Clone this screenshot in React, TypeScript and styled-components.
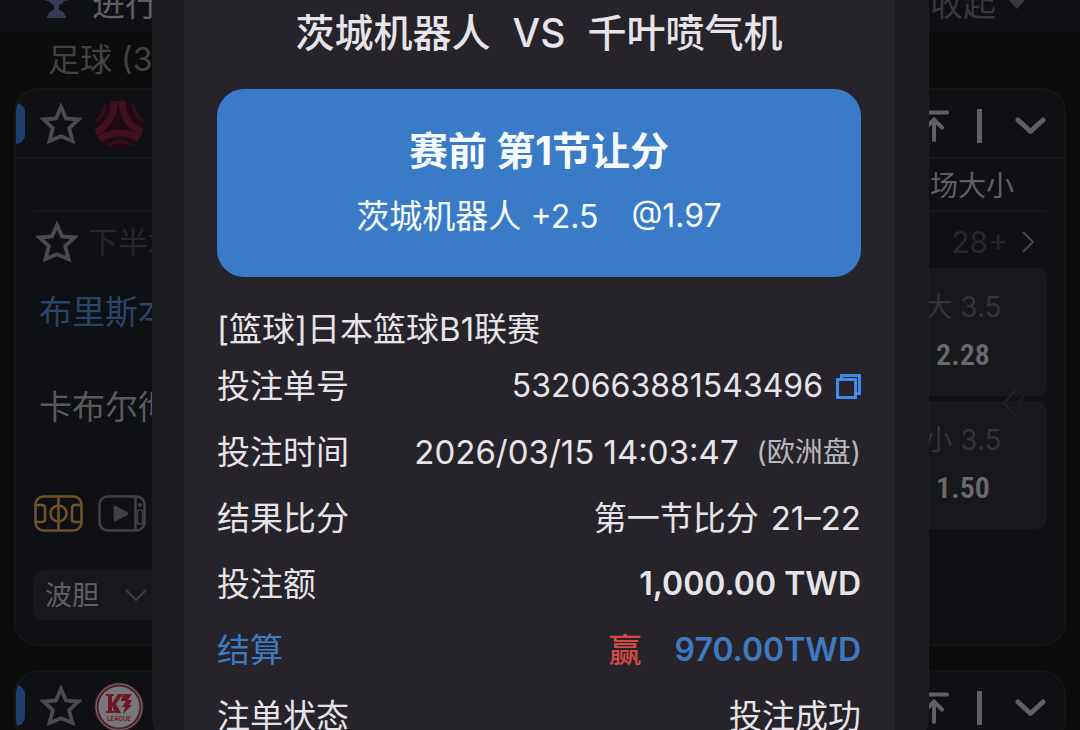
import React from "react";
import styled, { createGlobalStyle } from "styled-components";

const GlobalStyle = createGlobalStyle`
  * { box-sizing: border-box; }
  body {
    margin: 0;
    background: #0c0c0d;
    font-family: Inter, "Noto Sans CJK SC", sans-serif;
  }
  h1, h2, h3, p, dl, dd, dt { margin: 0; font-weight: 400; }
  button { border: 0; padding: 0; background: none; color: inherit; font: inherit; display: flex; cursor: pointer; }
  svg { display: block; flex: none; }
`;

const Screen = styled.div`
  position: relative;
  height: 100vh;
  overflow: hidden;
`;

/* ---------- match list ---------- */

const TopBar = styled.header`
  display: flex;
  align-items: flex-end;
  justify-content: space-between;
  height: 32px;
  padding: 0 54px 0 38px;
  overflow: hidden;
  background: #0f1014;
`;

const TopGroup = styled.div<{ $gap: number; $color: string }>`
  display: flex;
  align-items: center;
  gap: ${(p) => p.$gap}px;
  height: 56px;
  flex: none;
  font-size: 33px;
  line-height: 56px;
  color: ${(p) => p.$color};
`;

const SectionTitle = styled.h2`
  height: 56px;
  padding-left: 48px;
  font-size: 32px;
  line-height: 56px;
  color: #434345;
`;

const Card = styled.section`
  margin: 0 14px 24px;
  border: 2px solid #141517;
  border-radius: 24px;
  overflow: hidden;
  background: #0f1013;
`;

const LeagueBar = styled.div`
  display: flex;
  align-items: center;
  height: 69px;
  padding-right: 18px;
  border-bottom: 2px solid #17181a;
  color: #606063;
`;

const Marker = styled.span`
  width: 9px;
  height: 41px;
  margin-right: 15px;
  border-radius: 0 9px 9px 0;
  background: #1d4070;
`;

const LeagueLogo = styled.span`
  margin-left: 12px;
  margin-right: auto;
  padding-top: 2px;
`;

const BarTools = styled.div`
  display: flex;
  align-items: center;
  gap: 28px;
  padding-top: 4px;
`;

const Rule = styled.span`
  width: 5px;
  height: 34px;
  background: #606063;
`;

const CardBody = styled.div`
  padding: 0 17px 24px;
`;

const Columns = styled.div`
  display: flex;
  justify-content: flex-end;
  height: 53px;
  padding-right: 5px;
  border-bottom: 2px solid #16171a;
`;

const ColumnTitle = styled.h3`
  width: 168px;
  font-size: 28px;
  line-height: 55px;
  text-align: center;
  color: #606063;
`;

const PeriodRow = styled.div`
  display: flex;
  align-items: center;
  gap: 10px;
  height: 56px;
  padding: 4px 13px 0 3px;
  font-size: 30px;
  line-height: 48px;
  color: #26272a;
`;

const More = styled.button`
  align-items: center;
  gap: 14px;
  margin-left: auto;
`;

const MatchGrid = styled.div`
  display: grid;
  grid-template-columns: 1fr 168px;
`;

const Side = styled.div`
  padding-left: 6px;
`;

const Team = styled.p<{ $color: string }>`
  height: 95px;
  font-size: 33px;
  line-height: 89px;
  color: ${(p) => p.$color};
`;

const Media = styled.div`
  display: flex;
  gap: 15px;
  margin-top: 37px;
  margin-left: -5px;
`;

const Odds = styled.div`
  display: flex;
  flex-direction: column;
  gap: 5px;
`;

const Odd = styled.button`
  flex-direction: column;
  align-items: center;
  height: 128px;
  padding-top: 15px;
  border-radius: 10px;
  background: #17181b;
`;

const OddName = styled.span`
  font-size: 28px;
  line-height: 48px;
  color: #343538;
`;

const OddValue = styled.span`
  font-family: "Liberation Sans Narrow", "Roboto Condensed", Roboto, sans-serif;
  font-size: 30px;
  font-weight: 600;
  line-height: 48px;
  color: #6a6a6c;
`;

const Picker = styled.label`
  display: flex;
  align-items: center;
  width: 136px;
  height: 50px;
  margin-top: 38px;
  border-radius: 10px;
  background: #17181b;
  color: #404043;
`;

const PickerSelect = styled.select`
  appearance: none;
  width: 92px;
  height: 50px;
  padding: 0 0 0 12px;
  border: 0;
  background: none;
  color: #606063;
  font: inherit;
  font-size: 27px;
`;

const SideHandle = styled.span`
  position: absolute;
  top: 389px;
  right: 52px;
`;

/* ---------- bet slip dialog ---------- */

const Overlay = styled.div`
  position: absolute;
  inset: 0;
  padding: 0 151px 0 152px;
  overflow: hidden;
`;

const Dialog = styled.div`
  height: calc(100% + 16px);
  padding: 0 34px 0 32px;
  border-radius: 0 0 28px 28px;
  overflow: hidden;
  background: #1d1c20;
`;

const Slip = styled.div`
  height: 100%;
  padding: 0 34px 0 33px;
  background: #26232a;
  color: #e6e4e9;
`;

const Fixture = styled.h1`
  display: flex;
  justify-content: center;
  gap: 22px;
  height: 62px;
  font-size: 39px;
  font-weight: 500;
  line-height: 65px;
  white-space: nowrap;
`;

const Pick = styled.section`
  margin-top: 27px;
  padding: 31px 0 34px;
  border-radius: 27px;
  background: #3a7bc8;
  color: #f6fbff;
  text-align: center;
`;

const PickTitle = styled.h2`
  font-size: 39px;
  font-weight: 700;
  line-height: 61px;
`;

const PickLine = styled.p`
  display: flex;
  justify-content: center;
  gap: 33px;
  margin-top: 9px;
  font-size: 33px;
  line-height: 52px;
`;

const League = styled.p`
  margin-top: 28px;
  font-size: 33px;
  line-height: 48px;
`;

const Row = styled.div<{ $color?: string }>`
  display: flex;
  align-items: center;
  justify-content: space-between;
  height: 66px;
  font-size: 33px;
  line-height: 66px;
  white-space: nowrap;
  color: ${(p) => p.$color ?? "inherit"};
`;

const Value = styled.dd<{ $bold?: boolean; $gap?: number }>`
  display: flex;
  align-items: center;
  gap: ${(p) => p.$gap ?? 0}px;
  font-weight: ${(p) => (p.$bold ? 600 : 400)};
`;

const Num = styled.span`
  font-size: 32px;
`;

const Market = styled.span`
  font-size: 28px;
  color: #b9b7bd;
`;

const Win = styled.span`
  font-weight: 500;
  color: #d14a44;
`;

const Copy = styled.button`
  color: #3d8bea;
`;

/* ---------- drawings ---------- */

const Star = () => (
  <svg width="42" height="42" viewBox="0 0 42 42" fill="none" stroke="#4a4a4e" strokeWidth="3.8" strokeLinejoin="miter">
    <path d="M21 4 26 15.500 38.500 16.500 29.200 25.200 32.500 38 21 33.200 9.500 38 12.800 25.200 3.500 16.500 16 15.500Z" />
  </svg>
);

const Trophy = () => (
  <svg width="37" height="44" viewBox="0 0 37 44" fill="#363a50">
    <path d="M7 0h23v5h7c0 9-4 14-11 14-2 3-4 4-5 4v5c4 1 6 3 6 6h1v2H9v-2h1c0-3 2-5 6-6v-5c-1 0-3-1-5-4C4 19 0 14 0 5h7Z" />
  </svg>
);

const ToTop = () => (
  <svg width="32" height="34" viewBox="0 0 32 34" fill="none" stroke="currentColor" strokeWidth="4" strokeLinecap="round">
    <path d="M2 3.500H30" />
    <path d="M17 31V12M9 18.500 17 10.500 25 18.500" />
  </svg>
);

const ThickChevron = () => (
  <svg width="31" height="18" viewBox="0 0 31 18" fill="none" stroke="currentColor" strokeWidth="5" strokeLinecap="round" strokeLinejoin="round">
    <path d="M3 3 15.500 14.500 28 3" />
  </svg>
);

const BallLogo = () => (
  <svg width="50" height="50" viewBox="0 0 50 50">
    <defs>
      <clipPath id="ball"><circle cx="25" cy="25" r="24.500" /></clipPath>
    </defs>
    <g clipPath="url(#ball)">
      <circle cx="25" cy="25" r="24.500" fill="#1e0a11" />
      <g fill="none" stroke="#430f22" strokeWidth="7">
        <path d="M20 1C21 15 13 26 1 33" />
        <path d="M28 0C28 17 36 28 50 32" />
        <path d="M4 40C16 31 32 30 46 39" />
      </g>
      <g fill="none" stroke="#360d1c" strokeWidth="3">
        <path d="M11 4C11 13 7 18 0 22" />
        <path d="M39 4C40 12 44 18 50 22" />
        <path d="M14 45C22 41 32 41 40 46" />
      </g>
    </g>
  </svg>
);

const K3Logo = () => (
  <svg width="50" height="50" viewBox="0 0 50 50">
    <circle cx="25" cy="25" r="24.500" fill="#4d2029" />
    <circle cx="25" cy="25" r="23" fill="none" stroke="#77777b" strokeWidth="1" />
    <circle cx="25" cy="25" r="20.500" fill="#77777b" />
    <g fill="#6b1a24">
      <path d="M12 12h8v2h-2v7l6-9h5l-7 10 5 9h-6l-3-7v5h2v2h-8v-2h2V14h-2Z" />
      <path d="M29 12h9l-4 6h4l-3 5h3l-9 9 2-7h-3l4-6h-5Z" />
      <text x="25" y="39" fontSize="6" fontWeight="600" textAnchor="middle">LEAGUE</text>
    </g>
  </svg>
);

const PitchIcon = () => (
  <svg width="49" height="37" viewBox="0 0 49 37" fill="none" stroke="#6e5229" strokeWidth="2.600">
    <rect x="1.500" y="1.500" width="46" height="34" rx="8" />
    <circle cx="24.500" cy="18.500" r="8" />
    <path d="M24.500 1.500V35.500M2 10h6c2 0 3 1 3 3v11c0 2-1 3-3 3H2M47 10h-6c-2 0-3 1-3 3v11c0 2 1 3 3 3h6" />
  </svg>
);

const VideoIcon = () => (
  <svg width="48" height="37" viewBox="0 0 48 37" fill="none" stroke="#404145" strokeWidth="2.600">
    <rect x="1.500" y="1.500" width="45" height="34" rx="8" />
    <path d="M37.500 2V35" />
    <rect x="39.500" y="15" width="5" height="14" rx="2" strokeWidth="1.500" />
    <circle cx="42" cy="10" r="2" fill="#404145" stroke="none" />
    <path d="M17 12 29 18.500 17 25Z" fill="#404145" strokeLinejoin="round" />
  </svg>
);

const ChevronButton = styled.button`
  padding-left: 5px;
`;

const LeagueHeader = ({ logo, title }: { logo: React.ReactNode; title: string }) => (
  <LeagueBar>
    <Marker />
    <button aria-label={`收藏 ${title}`}><Star /></button>
    <LeagueLogo>{logo}</LeagueLogo>
    <BarTools>
      <button aria-label="置顶"><ToTop /></button>
      <Rule />
      <ChevronButton aria-label="展开"><ThickChevron /></ChevronButton>
    </BarTools>
  </LeagueBar>
);

const odds = [
  { name: "大 3.5", value: "2.28" },
  { name: "小 3.5", value: "1.50" },
];

export default function App() {
  return (
    <Screen>
      <GlobalStyle />
      <TopBar>
        <TopGroup $gap={17} $color="#606063">
          <Trophy />
          <span>进行中</span>
        </TopGroup>
        <TopGroup $gap={12} $color="#38383b">
          <span>收起</span>
          <svg width="18" height="10" viewBox="0 0 18 10" fill="currentColor"><path d="M0 0h18L9 10Z" /></svg>
        </TopGroup>
      </TopBar>
      <SectionTitle>足球 (3)</SectionTitle>

      <Card>
        <LeagueHeader logo={<BallLogo />} title="足球" />
        <CardBody>
          <Columns><ColumnTitle>全场大小</ColumnTitle></Columns>
          <PeriodRow>
            <button aria-label="收藏比赛"><Star /></button>
            <span>下半场</span>
            <More>
              28+
              <svg width="12" height="22" viewBox="0 0 12 22" fill="none" stroke="#48484b" strokeWidth="2"><path d="M1 1 11 11 1 21" /></svg>
            </More>
          </PeriodRow>
          <MatchGrid>
            <Side>
              <Team $color="#2a4567">布里斯本</Team>
              <Team $color="#5a5a5d">卡布尔彻</Team>
              <Media>
                <button aria-label="赛况"><PitchIcon /></button>
                <button aria-label="视频"><VideoIcon /></button>
              </Media>
            </Side>
            <Odds>
              {odds.map((o) => (
                <Odd key={o.name}>
                  <OddName>{o.name}</OddName>
                  <OddValue>{o.value}</OddValue>
                </Odd>
              ))}
            </Odds>
          </MatchGrid>
          <Picker>
            <PickerSelect aria-label="玩法" defaultValue="波胆">
              <option>波胆</option>
            </PickerSelect>
            <svg width="22" height="12" viewBox="0 0 22 12" fill="none" stroke="currentColor" strokeWidth="2"><path d="M1 1 11 11 21 1" /></svg>
          </Picker>
        </CardBody>
      </Card>

      <Card>
        <LeagueHeader logo={<K3Logo />} title="K3" />
      </Card>

      <SideHandle>
        <svg width="26" height="28" viewBox="0 0 26 28" fill="none" strokeWidth="2.500">
          <path d="M14 1 2 14 14 27" stroke="#1e1f30" />
          <path d="M24 5 15 14 24 23" stroke="#1a1b21" />
        </svg>
      </SideHandle>

      <Overlay>
        <Dialog role="dialog" aria-label="注单详情">
          <Slip>
            <Fixture>
              <span>茨城机器人</span>
              <span>VS</span>
              <span>千叶喷气机</span>
            </Fixture>
            <Pick>
              <PickTitle>赛前 第1节让分</PickTitle>
              <PickLine>
                <span>茨城机器人 <Num>+2.5</Num></span>
                <Num>@1.97</Num>
              </PickLine>
            </Pick>
            <League>[篮球]日本篮球B1联赛</League>
            <dl>
              <Row>
                <dt>投注单号</dt>
                <Value $gap={13}>
                  <Num>5320663881543496</Num>
                  <Copy aria-label="复制">
                    <svg width="25" height="25" viewBox="0 0 25 25" fill="none" stroke="currentColor" strokeWidth="3">
                      <path d="M1.500 5.500H19.500V23.500H1.500Z" />
                      <path d="M5.500 5V1.500H23.500V19.500H20" />
                    </svg>
                  </Copy>
                </Value>
              </Row>
              <Row>
                <dt>投注时间</dt>
                <Value $gap={18}>
                  <span>2026/03/15 14:03:47</span>
                  <Market>(欧洲盘)</Market>
                </Value>
              </Row>
              <Row>
                <dt>结果比分</dt>
                <Value $gap={12}>
                  <span>第一节比分</span>
                  <span>21–22</span>
                </Value>
              </Row>
              <Row>
                <dt>投注额</dt>
                <Value $bold><Num>1,000.00 TWD</Num></Value>
              </Row>
              <Row $color="#3f7ac0">
                <dt>结算</dt>
                <Value $bold $gap={33}>
                  <Win>赢</Win>
                  <Num>970.00TWD</Num>
                </Value>
              </Row>
              <Row>
                <dt>注单状态</dt>
                <Value>投注成功</Value>
              </Row>
            </dl>
          </Slip>
        </Dialog>
      </Overlay>
    </Screen>
  );
}
